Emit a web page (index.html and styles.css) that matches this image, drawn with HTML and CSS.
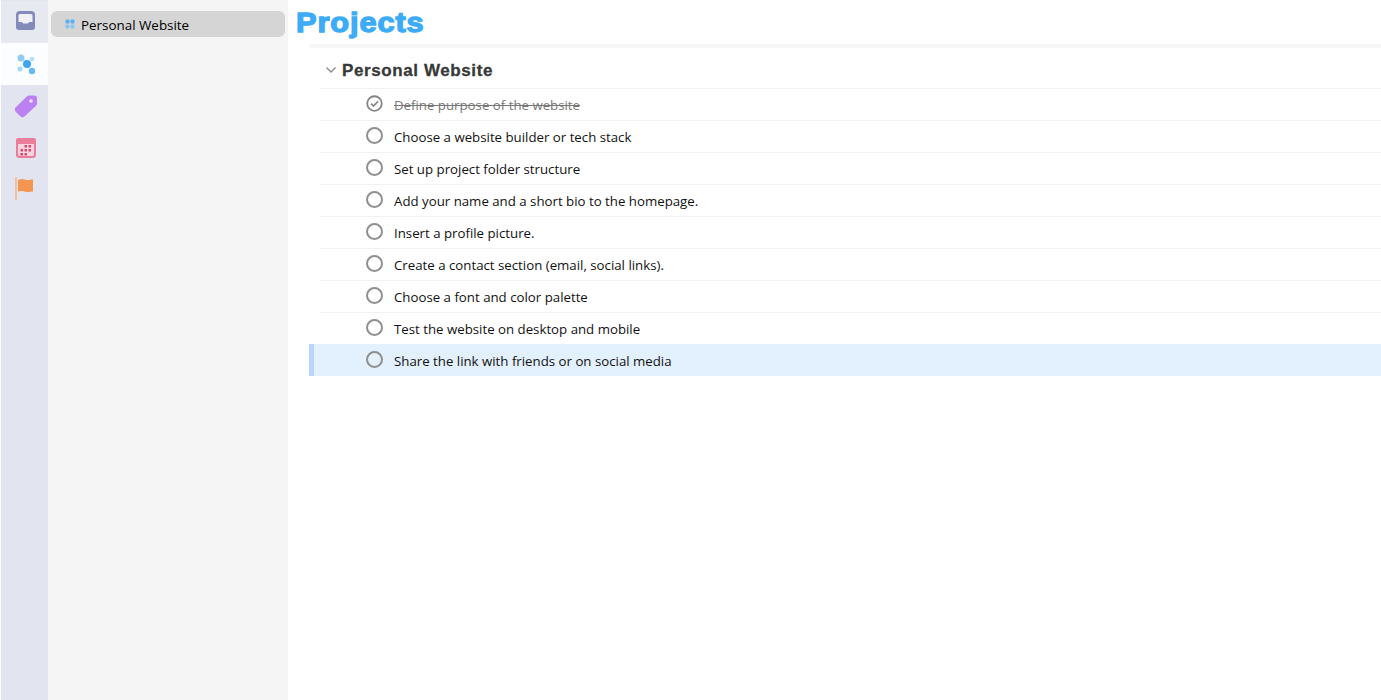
FILE: index.html
```html
<!DOCTYPE html>
<html lang="en">
<head>
    <meta charset="UTF-8">
    <title>Projects</title>
    <link rel="stylesheet" href="styles.css">
</head>
<body>
    <!-- Icon rail -->
    <nav class="rail">
        <div class="rail-item rail-top">
            <svg width="22" height="22" viewBox="0 0 22 22"><path d="M5 0h11a4 4 0 0 1 4 4v12a3 3 0 0 1-3 3H4a3 3 0 0 1-3-3V4a4 4 0 0 1 4-4z" fill="#8389b8"/><path d="M5 3h11a1.500 1.500 0 0 1 1.500 1.500v6.500h-2.500c-1 0-1.500.5-2 1.500H8c-.5-1-1-1.500-2-1.500H3.500V4.500A1.500 1.500 0 0 1 5 3z" fill="#eef0f6"/></svg>
        </div>
        <div class="rail-item rail-active">
            <svg width="22" height="22" viewBox="0 0 22 22"><circle cx="6" cy="5" r="3.500" fill="#8fcbf8"/><circle cx="17" cy="6" r="2.300" fill="#b5dcf9"/><circle cx="12" cy="11" r="4" fill="#3aa5f5"/><circle cx="5" cy="16" r="2.500" fill="#a5d6fa"/><circle cx="17" cy="18" r="3.200" fill="#66bbf7"/></svg>
        </div>
        <div class="rail-item">
            <svg width="24" height="24" viewBox="0 0 24 24"><path d="M15 1.500h5a3 3 0 0 1 3 3v5a3 3 0 0 1-1 2.200L11 22a3.500 3.500 0 0 1-5 0l-4-4a3.500 3.500 0 0 1 0-5L13 2.300a3 3 0 0 1 2-.8z" fill="#bb80f2"/><circle cx="17" cy="7" r="1.800" fill="#f0e4fc"/></svg>
        </div>
        <div class="rail-item">
            <svg width="24" height="22" viewBox="0 0 24 22"><rect x="3" y="2" width="18" height="18" rx="2.500" fill="#f8d5de" stroke="#ea7d9a" stroke-width="2"/><rect x="2" y="1" width="20" height="6" rx="2" fill="#ea7d9a"/><g fill="#d9486f"><rect x="10.500" y="8" width="2.500" height="2.500"/><rect x="14.500" y="8" width="2.500" height="2.500"/><rect x="6.500" y="12" width="2.500" height="2.500"/><rect x="10.500" y="12" width="2.500" height="2.500"/><rect x="14.500" y="12" width="2.500" height="2.500"/><rect x="6.500" y="16" width="2.500" height="2.500"/><rect x="10.500" y="16" width="2.500" height="2.500"/></g></svg>
        </div>
        <div class="rail-item rail-flag">
            <svg width="22" height="26" viewBox="0 0 22 26"><rect x="0" y="3" width="2" height="23" fill="#f3c09a"/><path d="M4 5.500c4-1.500 6 .5 9 .5 2 0 3-.5 5-.5v12c-2 0-3 .5-5 .5-3 0-5-2-10-.5V6z" fill="#f49550"/></svg>
        </div>
    </nav>

    <!-- Project list -->
    <aside class="sidebar">
        <div class="project-link">
            <svg class="dots" width="10" height="10" viewBox="0 0 10 10"><circle cx="2.500" cy="2.500" r="2.200" fill="#5fb0ec"/><circle cx="7.500" cy="2.500" r="2.200" fill="#5fb0ec"/><circle cx="2.500" cy="7.500" r="2.200" fill="#8cc6f0"/><circle cx="7.500" cy="7.500" r="2.200" fill="#8cc6f0"/></svg>
            <span>Personal Website</span>
        </div>
    </aside>

    <main class="main">
        <h1>Projects</h1>
        <div class="divider"></div>

        <div class="group">
            <div class="group-head">
                <svg class="chevron" width="12" height="8" viewBox="0 0 12 8"><path d="M1.500 1.500 6 6l4.500-4.500" fill="none" stroke="#8a8a8a" stroke-width="1.400"/></svg>
                <h2>Personal Website</h2>
            </div>
            <ul class="tasks">
                <li class="task done">
                    <svg class="check" width="18" height="18" viewBox="0 0 18 18"><circle cx="9" cy="9" r="7.700" fill="none" stroke="#858585" stroke-width="1.900"/><path d="M5.300 9.200 8 11.800l4.800-5.200" fill="none" stroke="#858585" stroke-width="1.800"/></svg>
                    <span>Define purpose of the website</span>
                </li>
                <li class="task"><i class="circle"></i><span>Choose a website builder or tech stack</span></li>
                <li class="task"><i class="circle"></i><span>Set up project folder structure</span></li>
                <li class="task"><i class="circle"></i><span>Add your name and a short bio to the homepage.</span></li>
                <li class="task"><i class="circle"></i><span>Insert a profile picture.</span></li>
                <li class="task"><i class="circle"></i><span>Create a contact section (email, social links).</span></li>
                <li class="task"><i class="circle"></i><span>Choose a font and color palette</span></li>
                <li class="task"><i class="circle"></i><span>Test the website on desktop and mobile</span></li>
                <li class="task selected"><i class="circle"></i><span>Share the link with friends or on social media</span></li>
            </ul>
        </div>
    </main>
</body>
</html>
```

FILE: styles.css
```css
html, body {
    height: 100%;
}

body {
    margin: 0;
    display: flex;
    height: 700px;
    overflow: hidden;
    background-color: #fff;
    color: #111;
    font-family: 'Open Sans', 'Noto Sans', sans-serif;
    font-size: 13.25px;
}

.rail {
    width: 47px;
    margin-left: 1px;
    background-color: #e2e5ef;
    flex-shrink: 0;
    padding-top: 1px;
}

.rail-item {
    height: 42px;
    display: flex;
    align-items: center;
    justify-content: center;
    padding-left: 3px;
}

.rail-top {
    background-color: #e7e9f1;
}

.rail-active {
    background-color: #fcfdfe;
}

.rail-flag {
    height: 36px;
}

.sidebar {
    width: 240px;
    flex-shrink: 0;
    background-color: #f5f5f5;
    padding: 11px 3px 0;
    box-sizing: border-box;
}

.project-link {
    height: 26px;
    background-color: #d5d5d5;
    border-radius: 6px;
    display: flex;
    align-items: center;
    padding-left: 14px;
    gap: 6px;
    color: #000;
    font-size: 13.4px;
    font-weight: 500;
}

.project-link span {
    padding-top: 2px;
}

.main {
    flex: 1;
    min-width: 0;
    padding-top: 1px;
}

h1 {
    width: 100px;
    margin: 0 0 0 8px;
    height: 43px;
    line-height: 44px;
    white-space: nowrap;
    font-family: 'Liberation Sans', Arial, sans-serif;
    font-size: 28px;
    font-weight: 700;
    color: #3cabf8;
    -webkit-text-stroke: 1.3px #3cabf8;
    letter-spacing: 0.8px;
    transform: scaleX(1.1);
    transform-origin: left center;
}

.divider {
    height: 4px;
    margin-left: 21px;
    background-color: #f6f6f6;
    border-radius: 3px 0 0 3px;
}

.group-head {
    height: 40px;
    box-sizing: border-box;
    margin-left: 32px;
    padding: 6px 0 0 5px;
    display: flex;
    align-items: center;
    gap: 5px;
}

.chevron {
    margin-top: -2px;
}

h2 {
    margin: 0;
    font-family: 'Liberation Sans', Arial, sans-serif;
    font-size: 17px;
    font-weight: 700;
    color: #383838;
    -webkit-text-stroke: 0.3px #383838;
    letter-spacing: 0.6px;
}

.tasks {
    list-style: none;
    margin: 0;
    padding: 0;
}

.task {
    height: 32px;
    margin-left: 32px;
    padding-left: 46px;
    box-sizing: border-box;
    border-top: 1px solid #f2f2f2;
    display: flex;
    align-items: center;
    gap: 11px;
}

.circle, .check {
    width: 17px;
    height: 17px;
    flex-shrink: 0;
    margin-top: -3px;
}

.circle {
    display: block;
    box-sizing: border-box;
    border: 2px solid #8f8f8f;
    border-radius: 50%;
}

.done span {
    color: #777;
    text-decoration: line-through;
}

.selected {
    margin-left: 21px;
    padding-left: 52px;
    border-top: 0;
    border-left: 5px solid #b8d6fb;
    background-color: #e3f0fd;
}

.selected span {
    padding-top: 2px;
}

.selected .circle {
    margin-top: -2px;
}
```
